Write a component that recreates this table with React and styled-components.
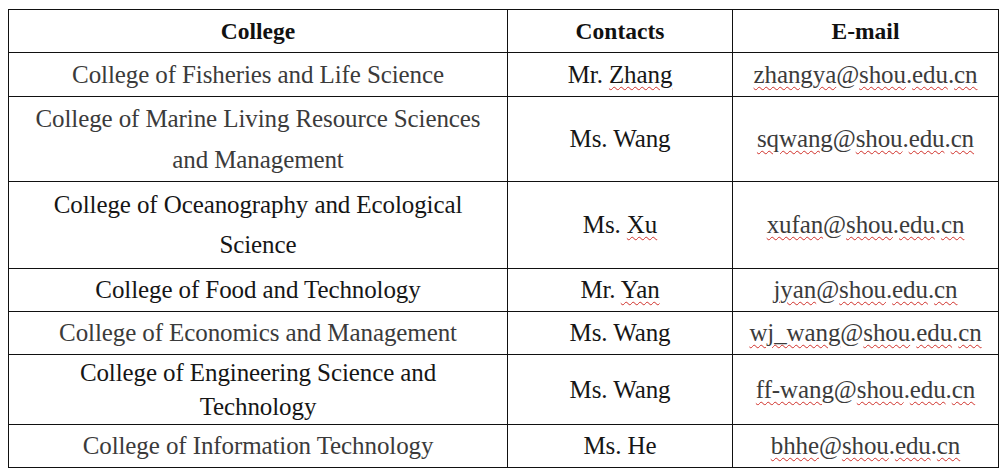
import React from "react";
import styled, { createGlobalStyle } from "styled-components";

const GlobalStyle = createGlobalStyle`
  html, body {
    margin: 0;
    padding: 0;
    background: #fff;
  }
  body {
    font-family: "Liberation Serif", "Times New Roman", serif;
  }
`;

const Page = styled.div`
  padding: 9px 8px;
`;

const Table = styled.table`
  border-collapse: collapse;
  table-layout: fixed;
  width: 991px;
  color: #1a1a1a;
`;

const HeadCell = styled.th`
  border: 1px solid #111;
  font-size: 23.5px;
  font-weight: bold;
  text-align: center;
  vertical-align: middle;
  padding: 0;
  color: #111;
`;

const Row = styled.tr`
  height: ${(p) => p.$h}px;
`;

const Cell = styled.td`
  border: 1px solid #111;
  font-size: 25px;
  text-align: center;
  vertical-align: middle;
  padding: 0;
  line-height: ${(p) => p.$lh || 30}px;
  color: ${(p) => (p.$grey ? "#3b3b3b" : "#161616")};
  letter-spacing: -0.1px;
`;

const Spell = styled.span`
  text-decoration: underline wavy #d0302a;
  text-decoration-thickness: 1px;
  text-underline-offset: 3px;
`;

const Email = ({ name }) => (
  <>
    <Spell>{name}</Spell>@<Spell>shou</Spell>.<Spell>edu</Spell>.
    <Spell>cn</Spell>
  </>
);

const rows = [
  {
    h: 44,
    college: "College of Fisheries and Life Science",
    grey: true,
    contact: ["Mr. ", "Zhang"],
    email: "zhangya",
  },
  {
    h: 85,
    lh: 41,
    college: ["College of Marine Living Resource Sciences", "and Management"],
    grey: true,
    contact: ["Ms. Wang"],
    email: "sqwang",
  },
  {
    h: 87,
    lh: 40,
    college: ["College of Oceanography and Ecological", "Science"],
    contact: ["Ms. ", "Xu"],
    email: "xufan",
  },
  {
    h: 43,
    college: "College of Food and Technology",
    contact: ["Mr. ", "Yan"],
    email: "jyan",
  },
  {
    h: 43,
    college: "College of Economics and Management",
    grey: true,
    contact: ["Ms. Wang"],
    email: "wj_wang",
  },
  {
    h: 70,
    lh: 34,
    college: ["College of Engineering Science and", "Technology"],
    contact: ["Ms. Wang"],
    email: "ff-wang",
  },
  {
    h: 43,
    college: "College of Information Technology",
    grey: true,
    contact: ["Ms. He"],
    email: "bhhe",
  },
];

export default function App() {
  return (
    <Page>
      <GlobalStyle />
      <Table>
        <colgroup>
          <col style={{ width: 499 }} />
          <col style={{ width: 225 }} />
          <col style={{ width: 266 }} />
        </colgroup>
        <thead>
          <Row $h={43}>
            <HeadCell>College</HeadCell>
            <HeadCell>Contacts</HeadCell>
            <HeadCell>E-mail</HeadCell>
          </Row>
        </thead>
        <tbody>
          {rows.map((r, i) => (
            <Row key={i} $h={r.h}>
              <Cell $lh={r.lh} $grey={r.grey}>
                {Array.isArray(r.college) ? (
                  <>
                    {r.college[0]}
                    <br />
                    {r.college[1]}
                  </>
                ) : (
                  r.college
                )}
              </Cell>
              <Cell>
                {r.contact[0]}
                {r.contact[1] && <Spell>{r.contact[1]}</Spell>}
              </Cell>
              <Cell $grey>
                <Email name={r.email} />
              </Cell>
            </Row>
          ))}
        </tbody>
      </Table>
    </Page>
  );
}
